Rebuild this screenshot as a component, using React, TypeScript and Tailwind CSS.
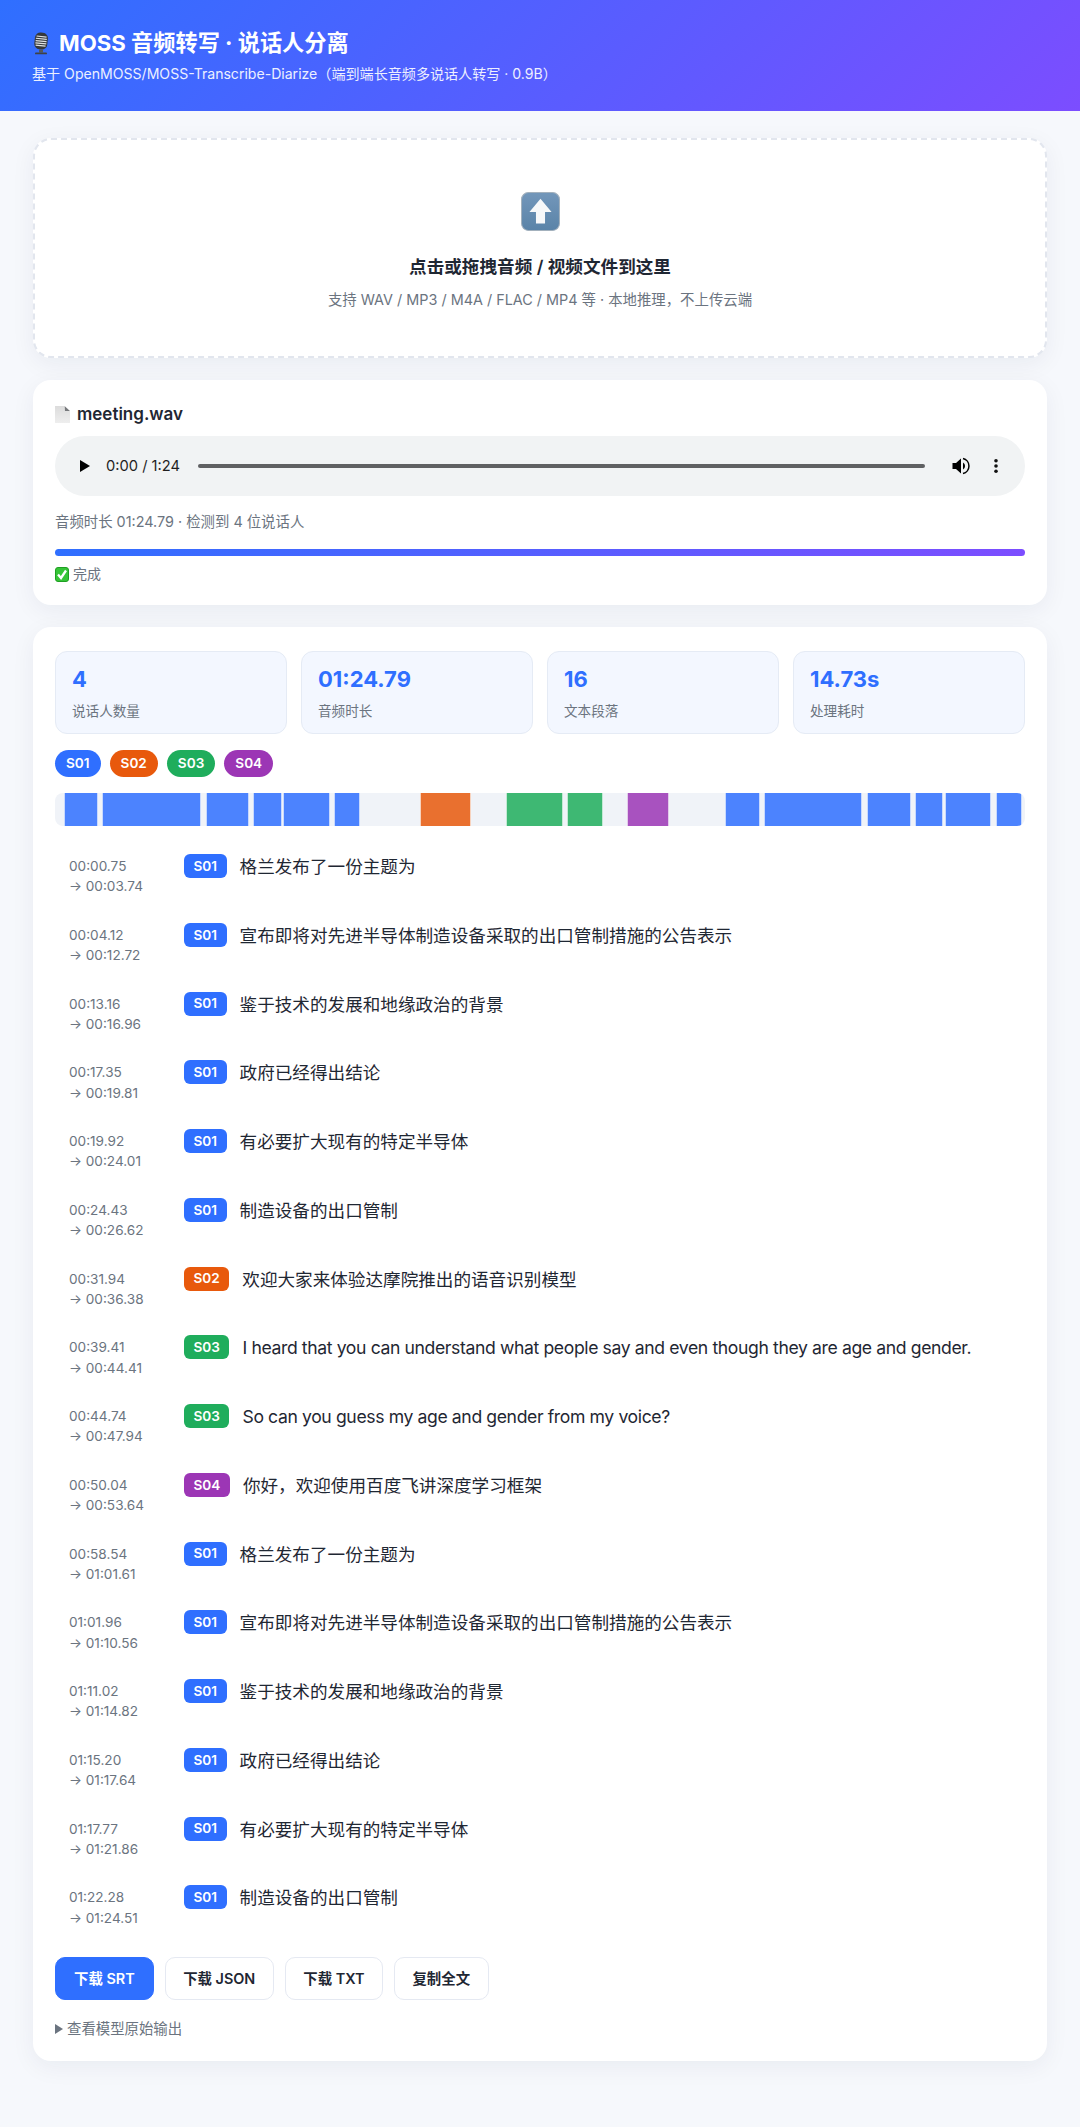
const rows = [
  { from: "00:00.75", to: "00:03.74", start: 0.75, end: 3.74, spk: "S01", text: "格兰发布了一份主题为" },
  { from: "00:04.12", to: "00:12.72", start: 4.12, end: 12.72, spk: "S01", text: "宣布即将对先进半导体制造设备采取的出口管制措施的公告表示" },
  { from: "00:13.16", to: "00:16.96", start: 13.16, end: 16.96, spk: "S01", text: "鉴于技术的发展和地缘政治的背景" },
  { from: "00:17.35", to: "00:19.81", start: 17.35, end: 19.81, spk: "S01", text: "政府已经得出结论" },
  { from: "00:19.92", to: "00:24.01", start: 19.92, end: 24.01, spk: "S01", text: "有必要扩大现有的特定半导体" },
  { from: "00:24.43", to: "00:26.62", start: 24.43, end: 26.62, spk: "S01", text: "制造设备的出口管制" },
  { from: "00:31.94", to: "00:36.38", start: 31.94, end: 36.38, spk: "S02", text: "欢迎大家来体验达摩院推出的语音识别模型" },
  { from: "00:39.41", to: "00:44.41", start: 39.41, end: 44.41, spk: "S03", latin: true, text: "I heard that you can understand what people say and even though they are age and gender." },
  { from: "00:44.74", to: "00:47.94", start: 44.74, end: 47.94, spk: "S03", latin: true, text: "So can you guess my age and gender from my voice?" },
  { from: "00:50.04", to: "00:53.64", start: 50.04, end: 53.64, spk: "S04", text: "你好，欢迎使用百度飞讲深度学习框架" },
  { from: "00:58.54", to: "01:01.61", start: 58.54, end: 61.61, spk: "S01", text: "格兰发布了一份主题为" },
  { from: "01:01.96", to: "01:10.56", start: 61.96, end: 70.56, spk: "S01", text: "宣布即将对先进半导体制造设备采取的出口管制措施的公告表示" },
  { from: "01:11.02", to: "01:14.82", start: 71.02, end: 74.82, spk: "S01", text: "鉴于技术的发展和地缘政治的背景" },
  { from: "01:15.20", to: "01:17.64", start: 75.2, end: 77.64, spk: "S01", text: "政府已经得出结论" },
  { from: "01:17.77", to: "01:21.86", start: 77.77, end: 81.86, spk: "S01", text: "有必要扩大现有的特定半导体" },
  { from: "01:22.28", to: "01:24.51", start: 82.28, end: 84.51, spk: "S01", text: "制造设备的出口管制" },
];

const speakerBg: Record<string, string> = {
  S01: "bg-[#2f6fff]",
  S02: "bg-[#e8590c]",
  S03: "bg-[#1fad5c]",
  S04: "bg-[#9c36b5]",
};

const stats = [
  { value: "4", label: "说话人数量" },
  { value: "01:24.79", label: "音频时长" },
  { value: "16", label: "文本段落" },
  { value: "14.73s", label: "处理耗时" },
];

const TOTAL = 84.79;

function MicIcon() {
  return (
    <svg width="18" height="23" viewBox="0 0 18 23" className="shrink-0">
      <g transform="rotate(6 9 10)">
        <rect x="2.500" y="0.500" width="13" height="17" rx="5.500" fill="#35383b" />
        <path d="M4 4.500h10M3.500 6.800h11M3.500 9.100h11M3.500 11.400h11M4 13.700h10" stroke="#dfe2e2" strokeWidth="1.200" />
      </g>
      <rect x="7" y="17.500" width="4" height="3" fill="#55585a" />
      <rect x="3" y="20.500" width="12" height="1.800" rx="0.900" fill="#3f4245" />
    </svg>
  );
}

function UploadIcon() {
  return (
    <svg width="39" height="39" viewBox="0 0 37 37">
      <defs>
        <linearGradient id="upbg" x1="0" y1="0" x2="0" y2="1">
          <stop offset="0" stopColor="#7397ba" />
          <stop offset="1" stopColor="#5a83a8" />
        </linearGradient>
      </defs>
      <rect x="0.500" y="0.500" width="36" height="36" rx="6.500" fill="url(#upbg)" stroke="#a3b1bd" />
      <path d="M18.500 6.500 29 19h-6.200v11h-8.600V19H8z" fill="#f7f8f9" />
    </svg>
  );
}

function DocIcon() {
  return (
    <svg width="15" height="17" viewBox="0 0 15 17" className="shrink-0">
      <defs>
        <linearGradient id="docbg" x1="0" y1="0" x2="0" y2="1">
          <stop offset="0" stopColor="#dcdcdc" />
          <stop offset="1" stopColor="#eeeeee" />
        </linearGradient>
      </defs>
      <path d="M0 0h9l1 5h5v12H0z" fill="url(#docbg)" />
      <path d="M9.500 0 15 5H10z" fill="#77797c" />
    </svg>
  );
}

function CheckIcon() {
  return (
    <svg width="14" height="15" viewBox="0 0 14 15" className="shrink-0">
      <rect x="0.500" y="0.500" width="13" height="14" rx="2.500" fill="#35c437" stroke="#1f9f22" />
      <path d="M3 7.500 6 11 11 3.500" fill="none" stroke="#fff" strokeWidth="2.300" />
    </svg>
  );
}

function AudioBar() {
  return (
    <div className="mt-[11px] flex h-[60px] items-center rounded-[30px] bg-[#f1f3f4] pl-[24px] pr-[27px]">
      <svg width="12" height="14" viewBox="0 0 12 14" className="shrink-0">
        <path d="M1 1v12l10-6z" fill="#000" />
      </svg>
      <span className="ml-[15px] text-[14.700px] text-[#1f1f1f]">0:00 / 1:24</span>
      <div className="ml-[18px] h-[4px] flex-1 rounded-full bg-[#5f6062]" />
      <svg width="18" height="18" viewBox="0 0 18 18" className="ml-[27px] shrink-0">
        <path d="M0.500 6v6h3.500L9 16.500V1.500L4 6z" fill="#000" />
        <path d="M11 5.500a4 4 0 0 1 0 7z" fill="#000" />
        <path d="M11 1.500a7.700 7.700 0 0 1 0 15" fill="none" stroke="#000" strokeWidth="1.500" />
      </svg>
      <svg width="4" height="14" viewBox="0 0 4 14" className="ml-[24px] shrink-0">
        <circle cx="2" cy="1.800" r="1.800" fill="#111" />
        <circle cx="2" cy="7" r="1.800" fill="#111" />
        <circle cx="2" cy="12.200" r="1.800" fill="#111" />
      </svg>
    </div>
  );
}

function Timeline() {
  return (
    <div className="relative mt-[16px] h-[33px] w-[970px] overflow-hidden rounded-[8px] bg-[#f0f3f8]">
      {rows.map((r) => (
        <div
          key={r.from}
          className={`absolute inset-y-0 border-x border-white/70 opacity-85 ${speakerBg[r.spk]}`}
          style={{ left: `${(r.start / TOTAL) * 100}%`, width: `${((r.end - r.start) / TOTAL) * 100}%` }}
        />
      ))}
    </div>
  );
}

function Card({ children, className }: { children: React.ReactNode; className?: string }) {
  return (
    <section className={`rounded-[18px] bg-white shadow-[0_6px_24px_rgba(20,30,60,0.06)] ${className ?? ""}`}>
      {children}
    </section>
  );
}

export default function App() {
  return (
    <main className="min-h-[2127px] bg-[#f6f8fc] font-['Inter','Noto_Sans_CJK_SC',sans-serif] text-[#1f2733]">
      <header className="h-[111px] bg-[linear-gradient(135deg,#2f6fff,#7c4dff)] px-[32px] pt-[28px] text-white">
        <h1 className="flex items-center gap-[9px] text-[22.200px] leading-[30px] font-bold">
          <MicIcon />
          MOSS 音频转写 · 说话人分离
        </h1>
        <p className="mt-[6px] text-[14.080px] leading-[20px] opacity-90">
          基于 OpenMOSS/MOSS-Transcribe-Diarize（端到端长音频多说话人转写 · 0.9B）
        </p>
      </header>

      <div className="flex flex-col gap-[22px] px-[33px] pt-[27px]">
        <Card className="flex h-[220px] flex-col items-center border-2 border-dashed border-[#e2e6ee] pt-[52px]">
          <UploadIcon />
          <p className="mt-[24px] text-[17.600px] leading-[24px] font-semibold">点击或拖拽音频 / 视频文件到这里</p>
          <p className="mt-[11px] text-[14.400px] leading-[20px] text-[#6b7480]">
            支持 WAV / MP3 / M4A / FLAC / MP4 等 · 本地推理，不上传云端
          </p>
        </Card>

        <Card className="h-[225px] px-[22px] pt-[23px]">
          <div className="flex items-center gap-[7px] text-[17px] leading-[22px] font-semibold">
            <DocIcon />
            meeting.wav
          </div>
          <AudioBar />
          <p className="mt-[16px] text-[14.400px] leading-[20px] text-[#6b7480]">音频时长 01:24.79 · 检测到 4 位说话人</p>
          <div className="mt-[17px] h-[7px] rounded-[4px] bg-[linear-gradient(90deg,#2f6fff,#7c4dff)]" />
          <div className="mt-[8px] flex items-center gap-[4px] text-[14px] leading-[20px] text-[#6b7480]">
            <CheckIcon />
            完成
          </div>
        </Card>

        <Card className="h-[1434px] px-[22px] pt-[24px]">
          <div className="grid grid-cols-4 gap-[14px]">
            {stats.map((s) => (
              <div key={s.label} className="h-[83px] rounded-[12px] border border-[#e5ebf5] bg-[#f3f7ff] px-[16px] pt-[13px]">
                <div className="text-[22px] leading-[28px] font-bold text-[#2f6fff]">{s.value}</div>
                <div className="mt-[9px] text-[13.600px] leading-[18px] text-[#6b7480]">{s.label}</div>
              </div>
            ))}
          </div>

          <div className="mt-[16px] flex gap-[9px]">
            {["S01", "S02", "S03", "S04"].map((s) => (
              <span key={s} className={`flex h-[27px] items-center rounded-full px-[11px] text-[13.600px] font-semibold text-white ${speakerBg[s]}`}>
                {s}
              </span>
            ))}
          </div>

          <Timeline />

          <div className="mt-[16px]">
            {rows.map((r) => (
              <div key={r.from} className="flex h-[68.750px] pl-[14px] pr-[15px] pt-[12px]">
                <div className="w-[115px] shrink-0 pt-[2px] text-[13.600px] leading-[20.400px] text-[#6b7480]">
                  <div>{r.from}</div>
                  <div>→ {r.to}</div>
                </div>
                <span className={`flex h-[24px] items-center rounded-[6px] px-[9.500px] text-[13.600px] font-semibold text-white ${speakerBg[r.spk]}`}>
                  {r.spk}
                </span>
                <span className={`ml-[13px] text-[17.600px] leading-[26px] ${r.latin ? "tracking-[-0.380px]" : ""}`}>{r.text}</span>
              </div>
            ))}
          </div>

          <div className="mt-[15px] flex items-center gap-[11px]">
            <button className="h-[43px] rounded-[10px] border border-[#2f6fff] bg-[#2f6fff] px-[18px] text-[14.400px] font-semibold text-white">下载 SRT</button>
            {["下载 JSON", "下载 TXT", "复制全文"].map((t) => (
              <button key={t} className="h-[43px] rounded-[10px] border border-[#e5e9f2] bg-white px-[17.500px] text-[14.400px] font-semibold">
                {t}
              </button>
            ))}
          </div>

          <div className="mt-[19px] flex items-center gap-[4px] text-[14.400px] leading-[20px] text-[#6b7480]">
            <svg width="8" height="10" viewBox="0 0 8 10" className="shrink-0">
              <path d="M0 0v10l8-5z" fill="#6b7480" />
            </svg>
            查看模型原始输出
          </div>
        </Card>
      </div>
    </main>
  );
}
